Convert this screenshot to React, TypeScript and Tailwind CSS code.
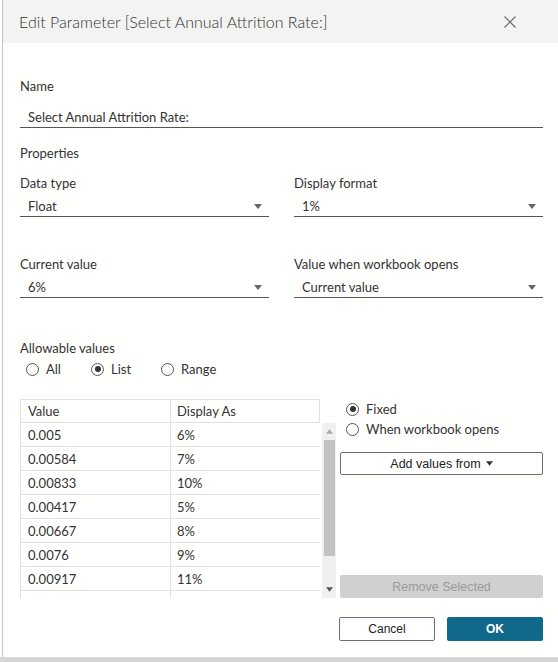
import React from "react";

const rows = [
  ["0.005", "6%"],
  ["0.00584", "7%"],
  ["0.00833", "10%"],
  ["0.00417", "5%"],
  ["0.00667", "8%"],
  ["0.0076", "9%"],
  ["0.00917", "11%"],
  ["0.01", "12%"],
];

const Caret = ({ className = "" }: { className?: string }) => (
  <svg width="8" height="5" viewBox="0 0 8 5" className={className}>
    <path d="M0 0 L8 0 L4 5 Z" fill="currentColor" />
  </svg>
);

const Radio = ({ checked, label }: { checked?: boolean; label: string }) => (
  <div className="flex items-center">
    <span className="w-[13px] h-[13px] rounded-full border border-[#555] flex items-center justify-center bg-white">
      {checked && <span className="w-[6px] h-[6px] rounded-full bg-[#333]" />}
    </span>
    <span className="ml-[7px]">{label}</span>
  </div>
);

const Select = ({ value }: { value: string }) => (
  <div className="h-[21px] border-b border-[#555] flex items-center justify-between pl-[8px] pr-[7px]">
    <span>{value}</span>
    <Caret className="text-[#666]" />
  </div>
);

export default function App() {
  return (
    <div
      className="w-[558px] h-[662px] bg-white overflow-hidden text-[13px] leading-[16px] text-[#333]"
      style={{ fontFamily: "Lato, 'Open Sans', sans-serif" }}
    >
      <div className="ml-[2px] h-[657px] bg-[#fffffd] border-l border-[#c4c4c4] flex flex-col">
        {/* Title bar */}
        <div className="h-[43px] bg-[#f3f3f1] flex items-center justify-between pl-[16px] pr-[42px] shrink-0">
          <span className="text-[16px] font-light text-[#333]">Edit Parameter [Select Annual Attrition Rate:]</span>
          <svg width="12" height="12" viewBox="0 0 12 12">
            <path d="M0.5 0.5 L11.5 11.5 M11.5 0.5 L0.5 11.5" stroke="#666" strokeWidth="1.1" />
          </svg>
        </div>

        <div className="pl-[17px] pr-[15px] flex flex-col">
          <div className="mt-[35px] h-[16px]">Name</div>
          <div className="mt-[13px] h-[21px] border-b border-[#555] flex items-center pl-[8px]">
            Select Annual Attrition Rate:
          </div>

          <div className="mt-[17px] h-[16px]">Properties</div>

          <div className="grid grid-cols-[249px_249px] gap-x-[25px]">
            <div>
              <div className="mt-[14px] h-[16px]">Data type</div>
              <div className="mt-[5px]">
                <Select value="Float" />
              </div>
              <div className="mt-[39px] h-[16px]">Current value</div>
              <div className="mt-[5px]">
                <Select value="6%" />
              </div>
            </div>
            <div>
              <div className="mt-[14px] h-[16px]">Display format</div>
              <div className="mt-[5px]">
                <Select value="1%" />
              </div>
              <div className="mt-[39px] h-[16px]">Value when workbook opens</div>
              <div className="mt-[5px]">
                <Select value="Current value" />
              </div>
            </div>
          </div>

          <div className="mt-[42px] h-[16px]">Allowable values</div>
          <div className="mt-[5px] h-[16px] flex items-center pl-[6px]">
            <div className="w-[65px]">
              <Radio label="All" />
            </div>
            <div className="w-[70px]">
              <Radio checked label="List" />
            </div>
            <Radio label="Range" />
          </div>

          {/* Values table + side panel */}
          <div className="mt-[22px] flex">
            <div className="w-[316px] flex flex-col">
              <div className="w-[300px] h-[24px] border border-[#e2e2e2] flex">
                <div className="w-[150px] border-r border-[#e2e2e2] pl-[7px] flex items-center">Value</div>
                <div className="pl-[6px] flex items-center">Display As</div>
              </div>
              <div className="flex h-[175px]">
                <div className="w-[300px] h-[175px] overflow-hidden border-l border-[#e2e2e2]">
                  {rows.map(([v, d]) => (
                    <div key={v} className="h-[24px] border-b border-[#e2e2e2] flex">
                      <div className="w-[150px] border-r border-[#e2e2e2] pl-[7px] flex items-center">{v}</div>
                      <div className="pl-[6px] flex items-center">{d}</div>
                    </div>
                  ))}
                </div>
                <div className="ml-[2px] w-[14px] h-[175px] bg-[#f0f0ee] flex flex-col items-center">
                  <Caret className="mt-[6px] rotate-180 text-[#a8a8a8] w-[7px]" />
                  <div className="mt-[6px] w-[11px] h-[116px] bg-[#c2c2c0]" />
                  <div className="flex-1" />
                  <Caret className="mb-[6px] text-[#555] w-[7px]" />
                </div>
              </div>
            </div>

            <div className="ml-[4px] flex-1 flex flex-col">
              <div className="h-[20px] flex items-center pl-[6px]">
                <Radio checked label="Fixed" />
              </div>
              <div className="h-[20px] flex items-center pl-[6px]">
                <Radio label="When workbook opens" />
              </div>
              <button
                className="mt-[13px] h-[23px] w-full border border-[#6f6f6f] rounded-[2px] bg-white flex items-center justify-center text-[12.5px] text-[#222]"
                style={{ fontFamily: "'Liberation Sans', Arial, sans-serif" }}
              >
                Add values from
                <Caret className="ml-[5px] text-[#333] w-[7px]" />
              </button>
              <div className="flex-1" />
              <button
                className="h-[23px] w-full rounded-[2px] bg-[#d0d0ce] text-[12.5px] text-[#9a9a9a] flex items-center justify-center"
                style={{ fontFamily: "'Liberation Sans', Arial, sans-serif" }}
              >
                Remove Selected
              </button>
            </div>
          </div>

          <div
            className="mt-[19px] flex justify-end gap-[12px] text-[12px]"
            style={{ fontFamily: "'Liberation Sans', Arial, sans-serif" }}
          >
            <button className="w-[96px] h-[24px] border border-[#6f6f6f] rounded-[2px] bg-white text-[#222]">
              Cancel
            </button>
            <button className="w-[96px] h-[24px] rounded-[2px] bg-[#10688a] text-white font-bold">OK</button>
          </div>
        </div>
      </div>
      <div className="h-[5px] bg-[#d5d5d3]" />
    </div>
  );
}
